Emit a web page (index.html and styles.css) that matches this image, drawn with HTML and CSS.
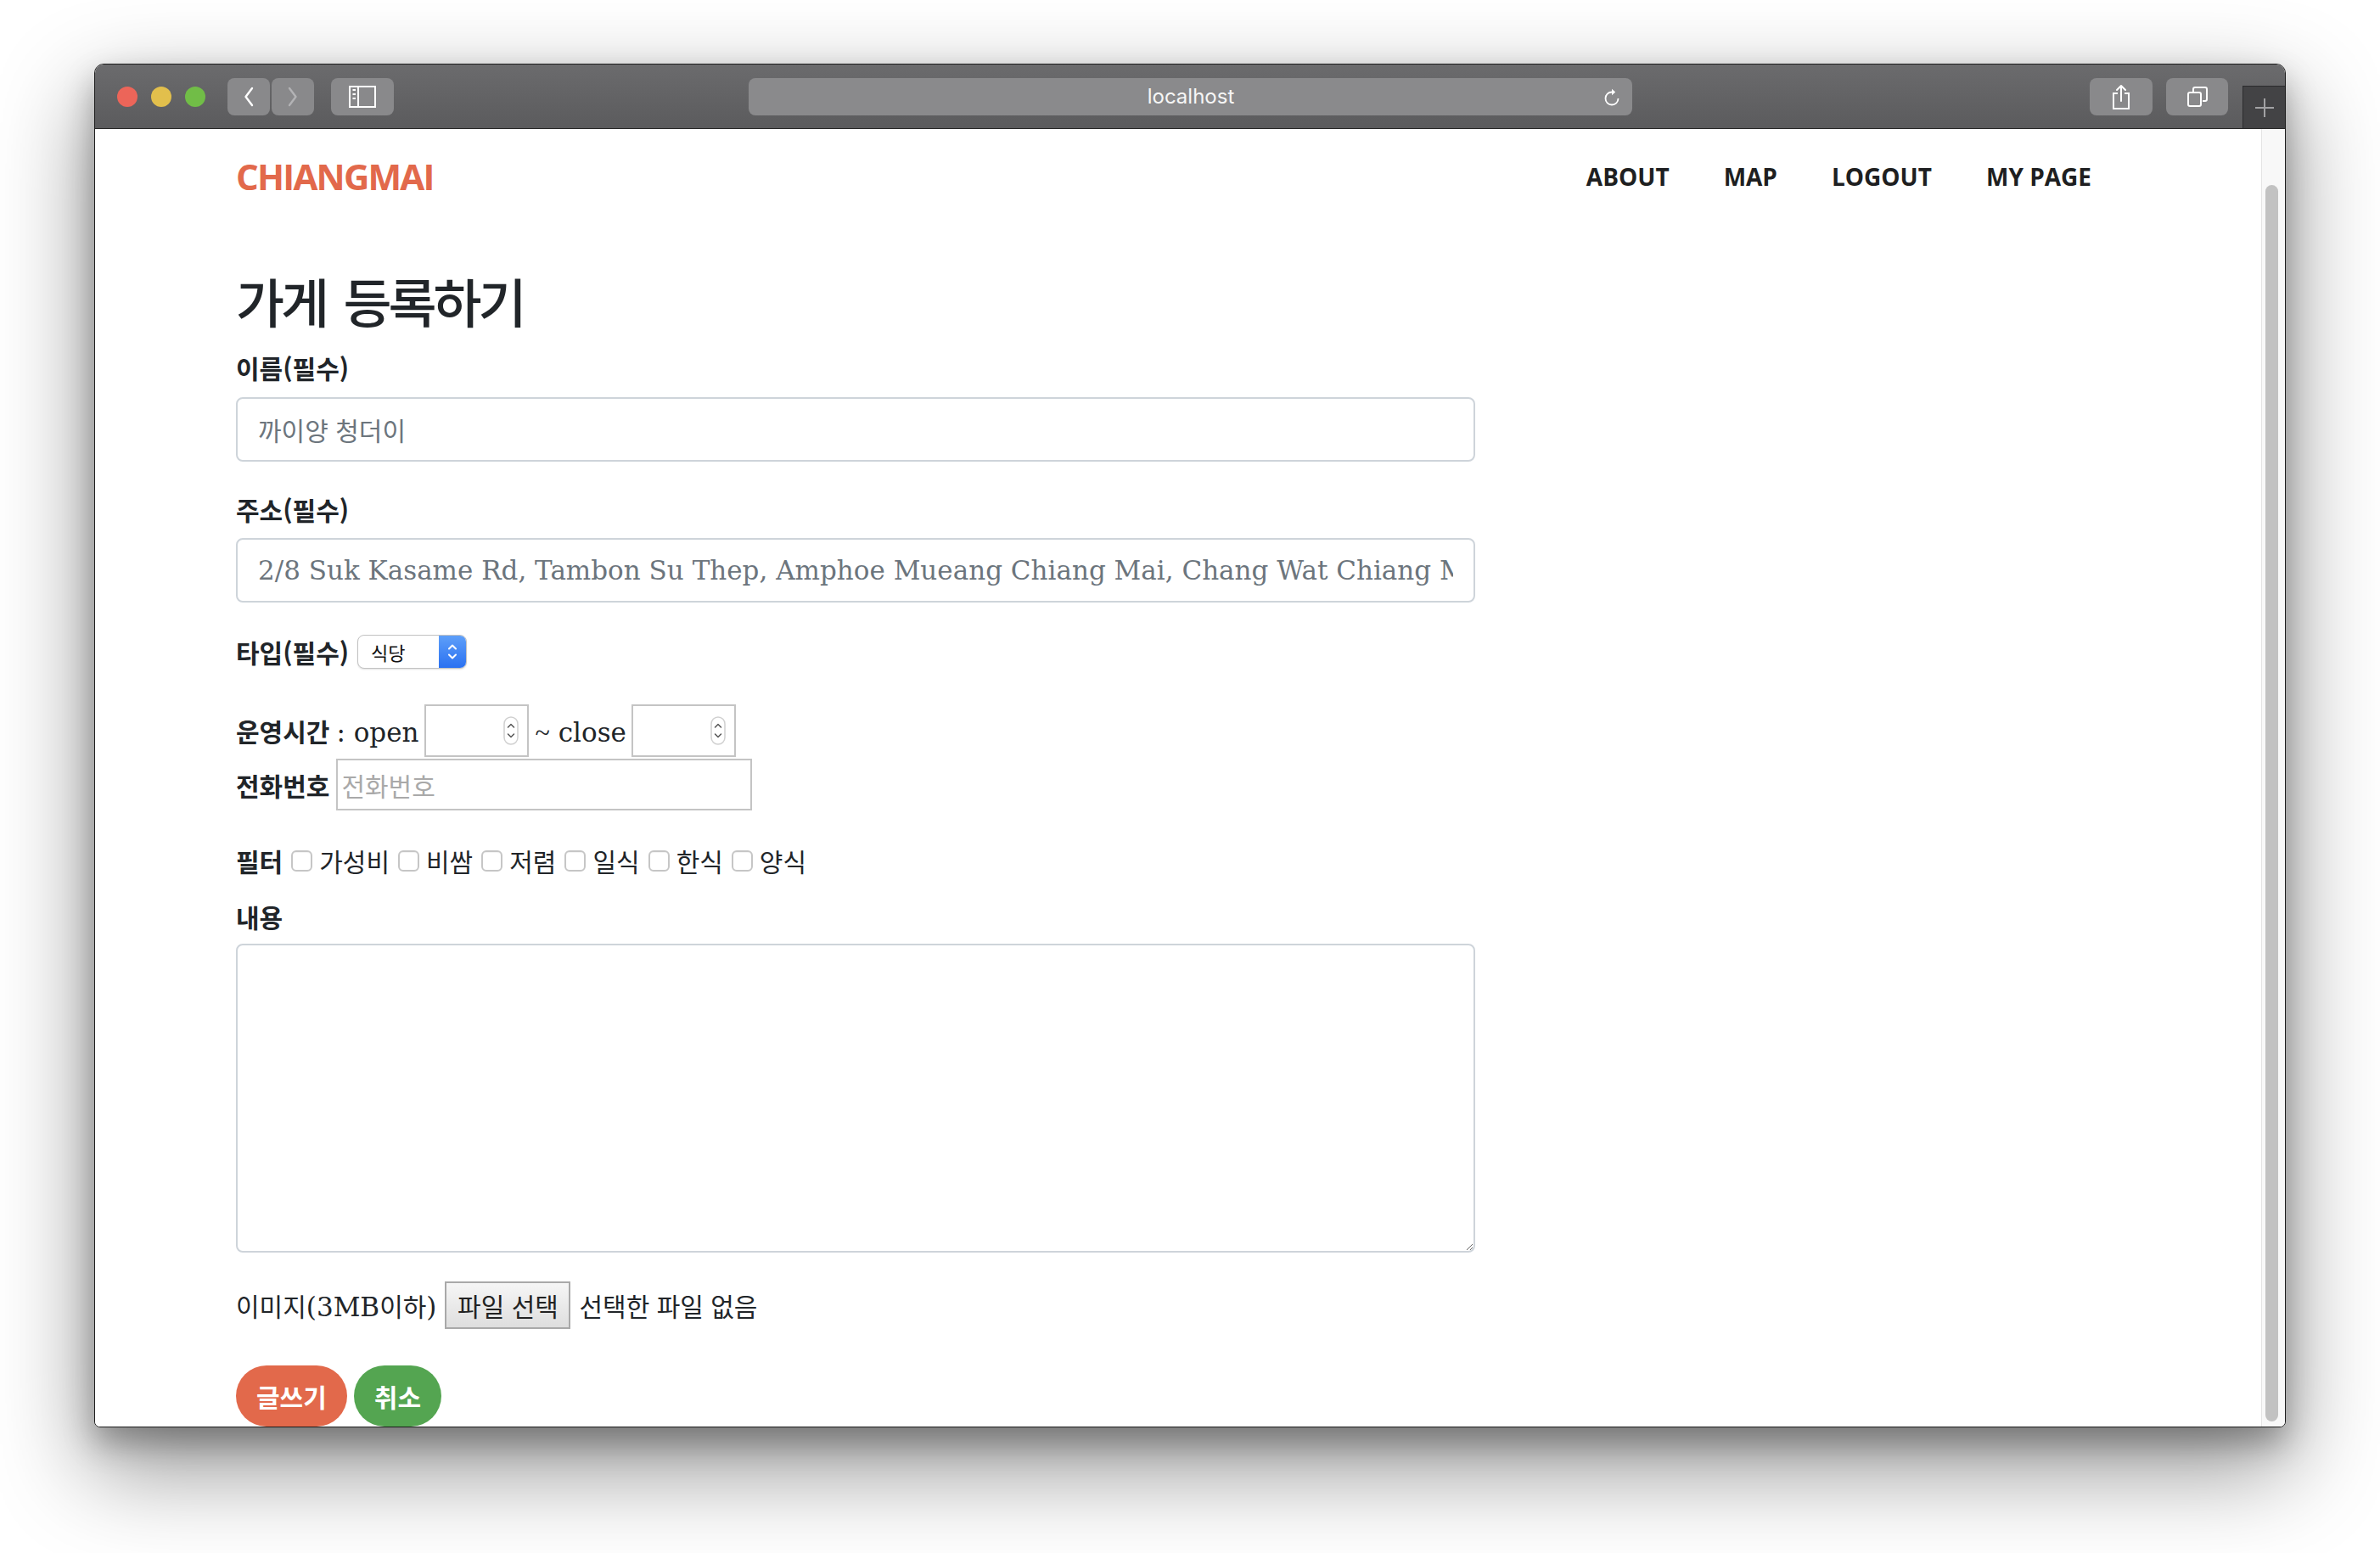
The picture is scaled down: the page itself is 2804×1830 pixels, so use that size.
FILE: index.html
```html
<!DOCTYPE html>
<html lang="ko">
<head>
<meta charset="utf-8">
<title>CHIANGMAI - 가게 등록하기</title>
<link rel="stylesheet" href="styles.css">
</head>
<body>
<div class="desktop">
  <div class="window">
    <div class="toolbar">
      <div class="tb-left">
        <div class="lights">
          <span class="light red"></span>
          <span class="light yellow"></span>
          <span class="light green"></span>
        </div>
        <div class="history">
          <span class="tb-btn narrow">
            <svg width="14" height="24" viewBox="0 0 14 24"><path d="M11 2 L3.5 12 L11 22" fill="none" stroke="#ffffff" stroke-width="2.4" stroke-linecap="round" stroke-linejoin="round"/></svg>
          </span>
          <span class="tb-btn narrow">
            <svg width="14" height="24" viewBox="0 0 14 24"><path d="M3 2 L10.5 12 L3 22" fill="none" stroke="#b3b3b5" stroke-width="2.4" stroke-linecap="round" stroke-linejoin="round"/></svg>
          </span>
        </div>
        <span class="tb-btn wide sidebar-btn">
          <svg width="32" height="26" viewBox="0 0 32 26"><rect x="1" y="1" width="30" height="24" fill="none" stroke="#ffffff" stroke-width="2"/><line x1="11" y1="1" x2="11" y2="25" stroke="#ffffff" stroke-width="2"/><path d="M4.5 5 H8 M4.5 10 H8 M4.5 15 H8" stroke="#ffffff" stroke-width="2"/></svg>
        </span>
      </div>
      <div class="address">
        <span class="url">localhost</span>
        <svg class="reload" width="20" height="24" viewBox="0 0 20 24"><path d="M10 6.5 A7.5 7.5 0 1 0 17.5 14" fill="none" stroke="#ffffff" stroke-width="1.8"/><path d="M10 2.8 L14.2 6.5 L10 10.2 Z" fill="#ffffff"/></svg>
      </div>
      <div class="tb-right">
        <span class="tb-btn wide">
          <svg width="24" height="32" viewBox="0 0 24 32"><path d="M8 12 H3 V30 H21 V12 H16" fill="none" stroke="#ffffff" stroke-width="2"/><path d="M12 21 V3 M7 8 L12 3 L17 8" fill="none" stroke="#ffffff" stroke-width="2" stroke-linecap="round" stroke-linejoin="round"/></svg>
        </span>
        <span class="tb-btn tabs-btn">
          <svg width="26" height="24" viewBox="0 0 26 24"><path d="M8 6 V3 Q8 1 10 1 H22 Q24 1 24 3 V15 Q24 17 22 17 H19" fill="none" stroke="#ffffff" stroke-width="2"/><rect x="2" y="7" width="15" height="16" rx="2" fill="none" stroke="#ffffff" stroke-width="2"/></svg>
        </span>
        <span class="newtab">
          <svg width="24" height="24" viewBox="0 0 24 24"><path d="M12 1 V23 M1 12 H23" stroke="#a2a2a4" stroke-width="2"/></svg>
        </span>
      </div>
    </div>

    <div class="viewport">
      <div class="page">
        <div class="container">
          <nav class="navbar">
            <a class="brand" href="#">CHIANGMAI</a>
            <ul class="nav-links">
              <li><a href="#">ABOUT</a></li>
              <li><a href="#">MAP</a></li>
              <li><a href="#">LOGOUT</a></li>
              <li><a href="#">MY PAGE</a></li>
            </ul>
          </nav>

          <form class="store-form">
            <h2 class="title">가게 등록하기</h2>

            <label class="lbl lbl-name">이름(필수)</label>
            <input class="form-control ko input-name" type="text" placeholder="까이양 청더이">

            <label class="lbl lbl-addr">주소(필수)</label>
            <input class="form-control input-addr" type="text" placeholder="2/8 Suk Kasame Rd, Tambon Su Thep, Amphoe Mueang Chiang Mai, Chang Wat Chiang Mai 50200">

            <div class="row type-row">
              <span class="ko bold">타입(필수)</span>
              <div class="select">
                <span class="select-value">식당</span>
                <span class="select-arrows">
                  <svg width="14" height="26" viewBox="0 0 14 26"><path d="M3 9.5 L7 5.5 L11 9.5 M3 16.5 L7 20.5 L11 16.5" fill="none" stroke="#ffffff" stroke-width="2" stroke-linecap="round" stroke-linejoin="round"/></svg>
                </span>
              </div>
            </div>

            <div class="row time-row">
              <span class="ko bold">운영시간</span>
              <span class="serif colon">: open</span>
              <span class="spin-field">
                <input class="plain-input" type="text" aria-label="open">
                <svg class="spinner" width="18" height="34" viewBox="0 0 18 34"><rect x="1" y="1" width="16" height="32" rx="8" fill="#ffffff" stroke="#d0d0d0" stroke-width="1.5"/><path d="M5.5 13 L9 9.5 L12.5 13 M5.5 21 L9 24.5 L12.5 21" fill="none" stroke="#555555" stroke-width="1.5" stroke-linecap="round" stroke-linejoin="round"/></svg>
              </span>
              <span class="serif tilde"><span class="tilde-glyph">~</span> close</span>
              <span class="spin-field">
                <input class="plain-input" type="text" aria-label="close">
                <svg class="spinner" width="18" height="34" viewBox="0 0 18 34"><rect x="1" y="1" width="16" height="32" rx="8" fill="#ffffff" stroke="#d0d0d0" stroke-width="1.5"/><path d="M5.5 13 L9 9.5 L12.5 13 M5.5 21 L9 24.5 L12.5 21" fill="none" stroke="#555555" stroke-width="1.5" stroke-linecap="round" stroke-linejoin="round"/></svg>
              </span>
            </div>

            <div class="row phone-row">
              <span class="ko bold">전화번호</span>
              <input class="phone-input ko" type="text" placeholder="전화번호">
            </div>

            <div class="row filter-row">
              <span class="ko bold">필터</span>
              <input class="check" type="checkbox"><span class="ko">가성비</span>
              <input class="check" type="checkbox"><span class="ko">비쌈</span>
              <input class="check" type="checkbox"><span class="ko">저렴</span>
              <input class="check" type="checkbox"><span class="ko">일식</span>
              <input class="check" type="checkbox"><span class="ko">한식</span>
              <input class="check" type="checkbox"><span class="ko">양식</span>
            </div>

            <label class="lbl lbl-content">내용</label>
            <textarea class="form-control content-area"></textarea>

            <div class="row image-row">
              <span class="ko">이미지</span><span class="serif">(3MB</span><span class="ko">이하</span><span class="serif">)</span>
              <button class="file-btn ko" type="button">파일 선택</button>
              <span class="ko file-status">선택한 파일 없음</span>
            </div>

            <div class="row actions">
              <button class="btn btn-write ko" type="button">글쓰기</button>
              <button class="btn btn-cancel ko" type="button">취소</button>
            </div>
          </form>
        </div>
      </div>
      <div class="scrollbar"><span class="thumb"></span></div>
    </div>
  </div>
</div>
</body>
</html>
```

FILE: styles.css
```css
* { box-sizing: border-box; }

html, body {
  margin: 0;
  padding: 0;
}

body {
  width: 2804px;
  height: 1830px;
  overflow: hidden;
  background: #ffffff;
  color: #212529;
  font-family: "DejaVu Serif", "Noto Sans CJK KR", serif;
  font-size: 31px;
}

.desktop {
  padding: 75px 0 0 111px;
}

.window {
  width: 2582px;
  height: 1607px;
  border: 1px solid #1c1c1c;
  border-radius: 11px 11px 7px 7px;
  overflow: hidden;
  display: flex;
  flex-direction: column;
  background: #ffffff;
  box-shadow: 0 44px 110px 6px rgba(0, 0, 0, 0.42), 0 18px 36px rgba(0, 0, 0, 0.28);
}

/* ---------- toolbar ---------- */
.toolbar {
  flex: none;
  height: 76px;
  display: grid;
  grid-template-columns: 1fr 1041px 1fr;
  align-items: center;
  background: linear-gradient(#6b6b6d, #5b5b5d);
  border-bottom: 1px solid #262626;
}

.tb-left {
  display: flex;
  align-items: center;
  padding-left: 26px;
}

.lights {
  display: flex;
  gap: 16px;
}

.light {
  width: 24px;
  height: 24px;
  border-radius: 50%;
}
.light.red { background: #ec6559; }
.light.yellow { background: #e2bf4c; }
.light.green { background: #71bd47; }

.history {
  display: flex;
  gap: 2px;
  margin-left: 26px;
}

.tb-btn {
  height: 44px;
  border-radius: 8px;
  background: #89898b;
  display: flex;
  align-items: center;
  justify-content: center;
}
.tb-btn.narrow { width: 50px; }
.tb-btn.wide { width: 74px; }
.sidebar-btn { margin-left: 20px; }

.address {
  height: 44px;
  border-radius: 8px;
  background: #8a8a8c;
  display: grid;
  grid-template-columns: 1fr auto 1fr;
  align-items: center;
}

.url {
  grid-column: 2;
  font-family: "Inter", "Liberation Sans", sans-serif;
  font-size: 24px;
  color: #f6f6f6;
  padding-left: 2px;
}

.reload {
  grid-column: 3;
  justify-self: end;
  margin-right: 14px;
}

.tb-right {
  align-self: stretch;
  display: flex;
  align-items: center;
  justify-content: flex-end;
}

.tabs-btn {
  width: 73px;
  margin-left: 16px;
}

.newtab {
  align-self: flex-end;
  width: 50px;
  height: 50px;
  margin-left: 17px;
  background: #434345;
  border-left: 1px solid #2c2c2e;
  border-top: 1px solid #2c2c2e;
  display: flex;
  align-items: center;
  justify-content: center;
}

/* ---------- viewport ---------- */
.viewport {
  flex: 1;
  min-height: 0;
  display: flex;
}

.page {
  flex: 1;
  overflow: hidden;
  background: #ffffff;
}

.scrollbar {
  flex: none;
  width: 28px;
  background: #f8f8f8;
  border-left: 1px solid #e4e4e4;
  padding: 66px 0 0 4px;
}

.thumb {
  display: block;
  width: 15px;
  height: 1457px;
  border-radius: 8px;
  background: #c2c2c2;
}

.container {
  width: 2220px;
  margin: 0 auto;
}

/* ---------- navbar ---------- */
.navbar {
  height: 112px;
  display: flex;
  align-items: center;
  justify-content: space-between;
}

.brand {
  font-family: "Open Sans", "Liberation Sans", sans-serif;
  font-weight: 700;
  font-size: 42px;
  letter-spacing: -1.8px;
  line-height: 1;
  color: #e2694b;
  text-decoration: none;
}

.nav-links {
  list-style: none;
  margin: 0 2px 0 0;
  padding: 0;
  display: flex;
}

.nav-links a {
  display: block;
  padding: 0 32px;
  font-family: "Open Sans", "Liberation Sans", sans-serif;
  font-weight: 700;
  font-size: 28px;
  line-height: 1;
  color: #1e1f21;
  text-decoration: none;
}

/* ---------- form ---------- */
.store-form {
  width: 1460px;
}

.ko {
  font-family: "Noto Sans CJK KR", sans-serif;
  font-size: 30px;
}

.bold { font-weight: 700; }

.serif {
  font-family: "DejaVu Serif", serif;
  font-size: 31px;
  padding-top: 4px;
}

.title {
  margin: 50px 0 0;
  height: 80px;
  line-height: 80px;
  font-family: "Noto Sans CJK KR", sans-serif;
  font-size: 62px;
  font-weight: 500;
  letter-spacing: -4px;
  word-spacing: 7px;
  color: #212529;
}

.lbl {
  display: block;
  height: 48px;
  line-height: 48px;
  font-family: "Noto Sans CJK KR", sans-serif;
  font-size: 30px;
  font-weight: 700;
}

.lbl-name { margin-top: 15px; }
.lbl-addr { margin-top: 32px; }

.form-control {
  display: block;
  width: 100%;
  height: 76px;
  padding: 0 24px;
  border: 2px solid #ced4da;
  border-radius: 8px;
  background: #ffffff;
  font-family: "DejaVu Serif", serif;
  font-size: 31px;
  color: #495057;
  outline: none;
}

.form-control::placeholder {
  color: #6c757d;
  opacity: 1;
}

.form-control.ko {
  font-family: "Noto Sans CJK KR", sans-serif;
  font-size: 30px;
}

.input-name { margin-top: 11px; }
.input-addr { margin-top: 10px; }

.row {
  display: flex;
  align-items: center;
}

/* type */
.type-row {
  height: 40px;
  margin-top: 38px;
}

.select {
  margin-left: 10px;
  width: 129px;
  height: 40px;
  display: flex;
  border: 1px solid #c2c2c2;
  border-radius: 8px;
  overflow: hidden;
  background: #ffffff;
  box-shadow: 0 1px 2px rgba(0, 0, 0, 0.12);
}

.select-value {
  flex: 1;
  padding-left: 15px;
  font-family: "Noto Sans CJK KR", sans-serif;
  font-size: 22px;
  line-height: 38px;
  color: #111111;
}

.select-arrows {
  width: 32px;
  background: linear-gradient(#5e9ff9, #2a71f1);
  display: flex;
  align-items: center;
  justify-content: center;
}

/* time */
.time-row {
  height: 62px;
  margin-top: 42px;
}

.colon { margin-left: 8px; }

.tilde { margin-left: 8px; }

.tilde-glyph {
  font-family: "Liberation Serif", serif;
  font-size: 32px;
}

.spin-field {
  position: relative;
  display: block;
  margin-left: 6px;
  width: 123px;
  height: 62px;
}

.plain-input {
  width: 100%;
  height: 100%;
  border: 2px solid #c4c4c4;
  background: #ffffff;
  padding: 0 6px;
  outline: none;
}

.spinner {
  position: absolute;
  right: 12px;
  top: 14px;
}

/* phone */
.phone-row {
  height: 61px;
  margin-top: 2px;
}

.phone-input {
  margin-left: 8px;
  width: 490px;
  height: 61px;
  border: 2px solid #c4c4c4;
  padding: 0 4px;
  background: #ffffff;
  color: #212529;
  outline: none;
}

.phone-input::placeholder {
  color: #a9a9a9;
  opacity: 1;
}

/* filter */
.filter-row {
  height: 40px;
  margin-top: 39px;
}

.check {
  appearance: none;
  -webkit-appearance: none;
  width: 25px;
  height: 25px;
  margin: 0 8px 0 10px;
  border: 2px solid #c6c6c6;
  border-radius: 6px;
  background: #ffffff;
  box-shadow: inset 0 1px 1px rgba(0, 0, 0, 0.05);
}

/* content */
.lbl-content { margin-top: 22px; }

.content-area {
  margin-top: 8px;
  height: 364px;
  resize: vertical;
  padding: 12px 24px;
}

/* image */
.image-row {
  height: 56px;
  margin-top: 34px;
}

.file-btn {
  margin-left: 10px;
  width: 148px;
  height: 56px;
  padding: 0;
  border: 2px solid #a9a9a9;
  border-radius: 0;
  background: linear-gradient(#f6f6f6, #dedede);
  color: #222222;
}

.file-status { margin-left: 10px; }

/* actions */
.actions {
  margin-top: 43px;
  gap: 8px;
}

.btn {
  height: 72px;
  padding: 0 24px;
  border: none;
  border-radius: 36px;
  color: #ffffff;
  font-weight: 700;
}

.btn-write { background: #e2694b; }
.btn-cancel { background: #54a551; }
```
